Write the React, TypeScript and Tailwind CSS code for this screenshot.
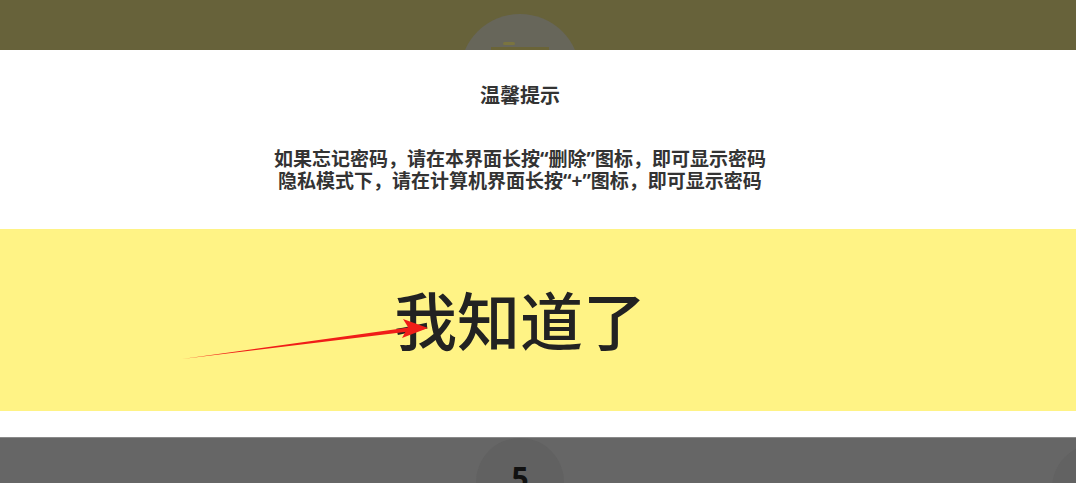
export default function App() {
  return (
    <div className="relative w-[1076px] h-[483px] overflow-hidden bg-white font-['Noto_Sans','Noto_Sans_CJK_SC',sans-serif]">
      {/* dimmed page behind the dialog */}
      <div className="h-[50px] bg-[#67623a] overflow-hidden flex justify-center pr-[36px] pt-[14px]">
        <div className="w-[120px] h-[120px] shrink-0 rounded-full bg-[#67665a] flex flex-col items-center pt-[28px]">
          <div className="w-[12px] h-[3px] rounded-full bg-[#7a7440] -ml-[22px]" />
          <div className="w-[58px] h-[8px] mt-[2px] bg-[#6a6438]" />
        </div>
      </div>

      {/* dialog */}
      <div className="flex flex-col">
        <div className="h-[179px] flex flex-col items-center pr-[36px] pt-[31px] text-[#333]">
          <div className="text-[20px] font-bold leading-[30px]">温馨提示</div>
          <div className="mt-[37px] text-[19px] font-bold leading-[22px] text-center">
            <div>如果忘记密码，请在本界面长按“删除”图标，即可显示密码</div>
            <div>隐私模式下，请在计算机界面长按“+”图标，即可显示密码</div>
          </div>
        </div>
        <div className="h-[182px] bg-[#fff385] flex items-center justify-center pr-[36px]">
          <span className="text-[63px] leading-none font-medium text-[#222] blur-[0.7px]">我知道了</span>
        </div>
        <div className="h-[26px] bg-white" />
      </div>

      {/* dimmed keypad below */}
      <div className="relative h-[46px] bg-[#666666] border-t border-[#8a8a8a] overflow-hidden">
        <div className="absolute left-[476px] top-[0px] w-[88px] h-[100px] rounded-full bg-[#616161] flex justify-center pt-[25px]">
          <span className="text-[30px] font-bold leading-none text-[#111]">5</span>
        </div>
        <div className="absolute left-[1052px] top-[6px] w-[88px] h-[100px] rounded-full bg-[#626262]" />
      </div>

      {/* red annotation arrow */}
      <svg className="absolute left-0 top-0 pointer-events-none" width="1076" height="483" viewBox="0 0 1076 483">
        <polygon points="182,359 412,327 413,331" fill="#f01d18" />
        <polygon points="428,328 403,319 408,327 402,338" fill="#f01d18" />
      </svg>
    </div>
  );
}
